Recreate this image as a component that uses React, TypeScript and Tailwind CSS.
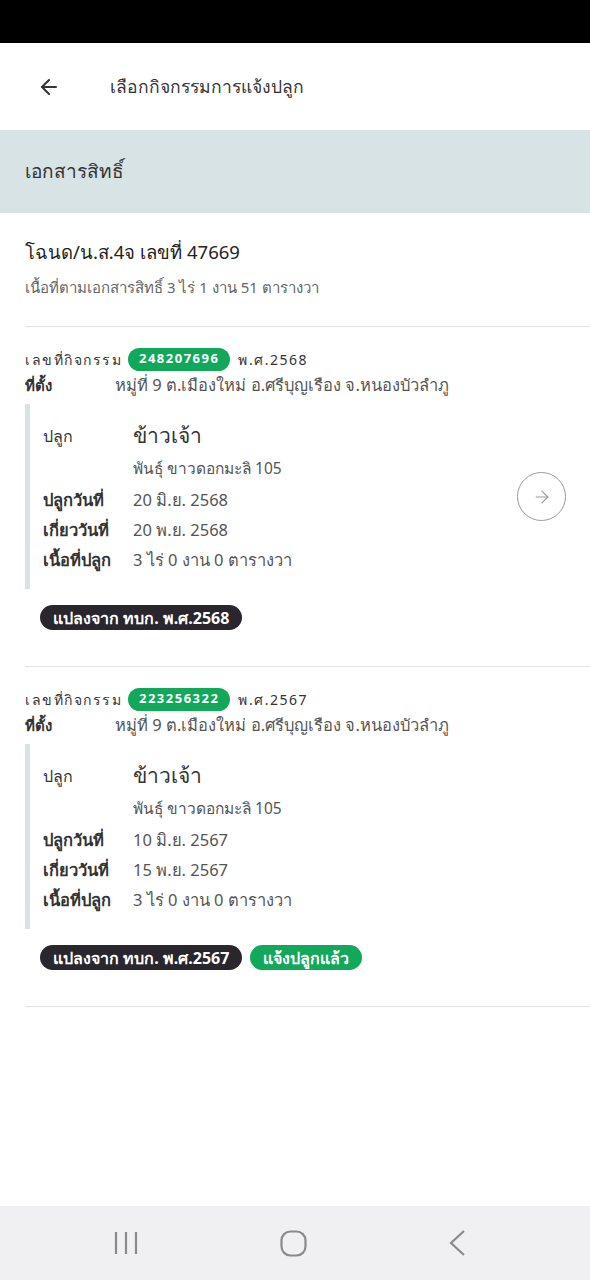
import { ArrowLeft, ArrowRight } from "lucide-react";

type Activity = {
  id: string;
  year: string;
  plantDate: string;
  harvestDate: string;
  reported: boolean;
};

const activities: Activity[] = [
  { id: "248207696", year: "2568", plantDate: "20 มิ.ย. 2568", harvestDate: "20 พ.ย. 2568", reported: false },
  { id: "223256322", year: "2567", plantDate: "10 มิ.ย. 2567", harvestDate: "15 พ.ย. 2567", reported: true },
];

function ActivityCard({ a }: { a: Activity }) {
  return (
    <div className="border-b border-[#e2e2e2] pt-[20px] pb-[36px]">
      <div className="flex items-center h-[24px] text-[14px] text-[#333]">
        <span className="tracking-[1.5px]">เลขที่กิจกรรม</span>
        <span className="ml-[6px] h-[23px] px-[11px] rounded-full bg-[#12a85a] text-white font-bold text-[13px] flex items-center tracking-[1.5px]">
          {a.id}
        </span>
        <span className="ml-[8px] tracking-[1.5px]">พ.ศ.{a.year}</span>
      </div>
      <div className="flex items-center h-[28px]">
        <span className="w-[90px] font-bold text-[15px] text-[#333]">ที่ตั้ง</span>
        <span className="text-[16.5px] text-[#555]">หมู่ที่ 9 ต.เมืองใหม่ อ.ศรีบุญเรือง จ.หนองบัวลำภู</span>
      </div>
      <div className="flex items-center mt-[5px]">
        <div className="flex-1 border-l-[5px] border-[#d8e3e5] pl-[13px] pt-[15px] pb-[14px]">
          <div className="flex items-center h-[33px]">
            <span className="w-[90px] text-[16px] text-[#333]">ปลูก</span>
            <span className="text-[21px] text-[#333]">ข้าวเจ้า</span>
          </div>
          <div className="flex items-center h-[33px] text-[15.5px] text-[#555]">
            <span className="w-[90px]"></span>
            <span>พันธุ์ ขาวดอกมะลิ 105</span>
          </div>
          <div className="flex items-center h-[30px] text-[16.5px]">
            <span className="w-[90px] font-bold text-[#333]">ปลูกวันที่</span>
            <span className="text-[#555]">{a.plantDate}</span>
          </div>
          <div className="flex items-center h-[30px] text-[16.5px]">
            <span className="w-[90px] font-bold text-[#333]">เกี่ยววันที่</span>
            <span className="text-[#555]">{a.harvestDate}</span>
          </div>
          <div className="flex items-center h-[30px] text-[16.5px]">
            <span className="w-[90px] font-bold text-[#333]">เนื้อที่ปลูก</span>
            <span className="text-[#555]">3 ไร่ 0 งาน 0 ตารางวา</span>
          </div>
        </div>
        {!a.reported && (
          <div className="mr-[24px] w-[49px] h-[49px] rounded-full border border-[#9a9a9a] flex items-center justify-center text-[#9a9a9a]">
            <ArrowRight size={20} strokeWidth={1.3} />
          </div>
        )}
      </div>
      <div className="flex gap-[8px] mt-[16px] ml-[15px]">
        <span className="h-[25px] px-[13px] rounded-full bg-[#2a262e] text-white font-bold text-[16px] flex items-center">
          แปลงจาก ทบก. พ.ศ.{a.year}
        </span>
        {a.reported && (
          <span className="h-[25px] px-[13px] rounded-full bg-[#12a85a] text-white font-bold text-[16px] flex items-center">
            แจ้งปลูกแล้ว
          </span>
        )}
      </div>
    </div>
  );
}

export default function App() {
  return (
    <div className="w-[590px] h-[1280px] flex flex-col bg-white font-['Noto_Sans',sans-serif] overflow-hidden">
      <div className="h-[43px] bg-black shrink-0" />
      <div className="h-[87px] flex items-center shrink-0">
        <div className="w-[110px] pl-[37px] text-[#333]">
          <ArrowLeft size={24} strokeWidth={2} />
        </div>
        <span className="text-[17.5px] text-[#333]">เลือกกิจกรรมการแจ้งปลูก</span>
      </div>
      <div className="h-[83px] bg-[#d8e3e5] flex items-center px-[25px] shrink-0">
        <span className="text-[19px] text-[#333]">เอกสารสิทธิ์</span>
      </div>
      <div className="flex-1 pl-[25px]">
        <div className="pt-[23px] pb-[25px] border-b border-[#e2e2e2]">
          <div className="text-[18.5px] text-[#222] h-[32px] flex items-center">โฉนด/น.ส.4จ เลขที่ 47669</div>
          <div className="text-[15px] text-[#666] h-[28px] flex items-center mt-[5px]">
            เนื้อที่ตามเอกสารสิทธิ์ 3 ไร่ 1 งาน 51 ตารางวา
          </div>
        </div>
        {activities.map((a) => (
          <ActivityCard key={a.id} a={a} />
        ))}
      </div>
      <div className="h-[74px] bg-[#f0f0f2] flex items-center justify-between pl-[113px] pr-[124px] shrink-0">
        <svg width="26" height="26" viewBox="0 0 26 26" fill="none" stroke="#8a8a8a" strokeWidth="2.2">
          <path d="M3 2v22M13 2v22M23 2v22" />
        </svg>
        <svg width="27" height="27" viewBox="0 0 27 27" fill="none" stroke="#8a8a8a" strokeWidth="2.2">
          <rect x="1.5" y="1.5" width="24" height="24" rx="9" />
        </svg>
        <svg width="18" height="28" viewBox="0 0 18 28" fill="none" stroke="#8a8a8a" strokeWidth="2.2">
          <path d="M16 2L3 14l13 12" />
        </svg>
      </div>
    </div>
  );
}
